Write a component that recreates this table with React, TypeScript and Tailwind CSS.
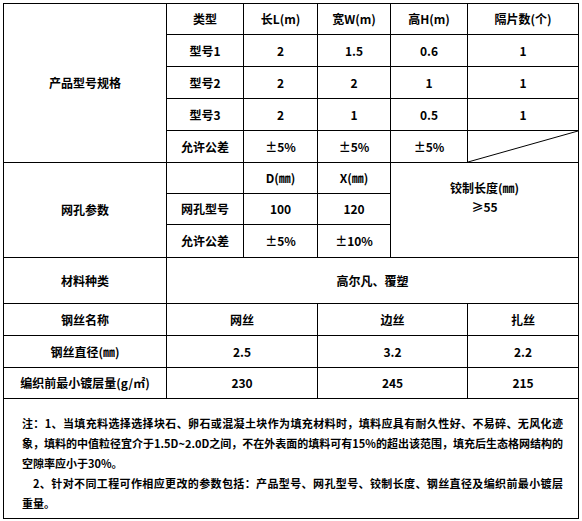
import React from "react";

const F = { fontFamily: '"Noto Sans CJK SC", "Noto Sans", sans-serif' };

function Td({
  children,
  className = "",
  colSpan,
  rowSpan,
}: {
  children?: React.ReactNode;
  className?: string;
  colSpan?: number;
  rowSpan?: number;
}) {
  return (
    <td
      colSpan={colSpan}
      rowSpan={rowSpan}
      className={"border border-black text-center align-middle p-0 leading-none " + className}
    >
      {children}
    </td>
  );
}

export default function App() {
  return (
    <div className="bg-white w-[582px] h-[521px] pt-[3px] pl-[3px]" style={F}>
      <table className="table-fixed border-collapse border border-black w-[575px] text-[12px] font-bold text-black">
        <colgroup>
          <col className="w-[163px]" />
          <col className="w-[77px]" />
          <col className="w-[74px]" />
          <col className="w-[73px]" />
          <col className="w-[77px]" />
          <col className="w-[111px]" />
        </colgroup>
        <tbody>
          <tr className="h-[31px]">
            <Td rowSpan={5}>产品型号规格</Td>
            <Td>类型</Td>
            <Td>长L(m)</Td>
            <Td>宽W(m)</Td>
            <Td>高H(m)</Td>
            <Td>隔片数(个)</Td>
          </tr>
          <tr className="h-[32px]">
            <Td>型号1</Td>
            <Td>2</Td>
            <Td>1.5</Td>
            <Td>0.6</Td>
            <Td>1</Td>
          </tr>
          <tr className="h-[32px]">
            <Td>型号2</Td>
            <Td>2</Td>
            <Td>2</Td>
            <Td>1</Td>
            <Td>1</Td>
          </tr>
          <tr className="h-[32px]">
            <Td>型号3</Td>
            <Td>2</Td>
            <Td>1</Td>
            <Td>0.5</Td>
            <Td>1</Td>
          </tr>
          <tr className="h-[32px]">
            <Td>允许公差</Td>
            <Td>±5%</Td>
            <Td>±5%</Td>
            <Td>±5%</Td>
            <Td className="relative">
              <svg className="absolute inset-0 w-full h-full" preserveAspectRatio="none" viewBox="0 0 100 100">
                <line x1="0" y1="100" x2="100" y2="0" stroke="black" strokeWidth="1" vectorEffect="non-scaling-stroke" />
              </svg>
            </Td>
          </tr>
          <tr className="h-[31px]">
            <Td rowSpan={3}>网孔参数</Td>
            <Td></Td>
            <Td>D(㎜)</Td>
            <Td>X(㎜)</Td>
            <Td colSpan={2} rowSpan={3} className="!align-top">
              <div className="pt-[15px] leading-[19px]">
                <div>铰制长度(㎜)</div>
                <div>≥55</div>
              </div>
            </Td>
          </tr>
          <tr className="h-[31px]">
            <Td>网孔型号</Td>
            <Td>100</Td>
            <Td>120</Td>
          </tr>
          <tr className="h-[33px]">
            <Td>允许公差</Td>
            <Td>±5%</Td>
            <Td>±10%</Td>
          </tr>
          <tr className="h-[46px]">
            <Td>材料种类</Td>
            <Td colSpan={5}>高尔凡、覆塑</Td>
          </tr>
          <tr className="h-[32px]">
            <Td>钢丝名称</Td>
            <Td colSpan={2}>网丝</Td>
            <Td colSpan={2}>边丝</Td>
            <Td>扎丝</Td>
          </tr>
          <tr className="h-[32px]">
            <Td>钢丝直径(㎜)</Td>
            <Td colSpan={2}>2.5</Td>
            <Td colSpan={2}>3.2</Td>
            <Td>2.2</Td>
          </tr>
          <tr className="h-[31px]">
            <Td>编织前最小镀层量(g/㎡)</Td>
            <Td colSpan={2}>230</Td>
            <Td colSpan={2}>245</Td>
            <Td>215</Td>
          </tr>
          <tr>
            <td colSpan={6} className="border border-black align-top p-0 h-[120px]">
              <div className="pt-[14px] pl-[18px] pr-[15px] text-[11px] leading-[20px] text-left">
                <div className="whitespace-nowrap text-justify [text-align-last:justify]">
                  注：1、当填充料选择选择块石、卵石或混凝土块作为填充材料时，填料应具有耐久性好、不易碎、无风化迹
                </div>
                <div className="whitespace-nowrap text-justify [text-align-last:justify]">
                  象，填料的中值粒径宜介于1.5D~2.0D之间，不在外表面的填料可有15%的超出该范围，填充后生态格网结构的
                </div>
                <div className="whitespace-nowrap">空隙率应小于30%。</div>
                <div className="whitespace-nowrap pl-[11px] text-justify [text-align-last:justify]">
                  2、针对不同工程可作相应更改的参数包括：产品型号、网孔型号、铰制长度、钢丝直径及编织前最小镀层
                </div>
                <div className="whitespace-nowrap">重量。</div>
              </div>
            </td>
          </tr>
        </tbody>
      </table>
    </div>
  );
}
